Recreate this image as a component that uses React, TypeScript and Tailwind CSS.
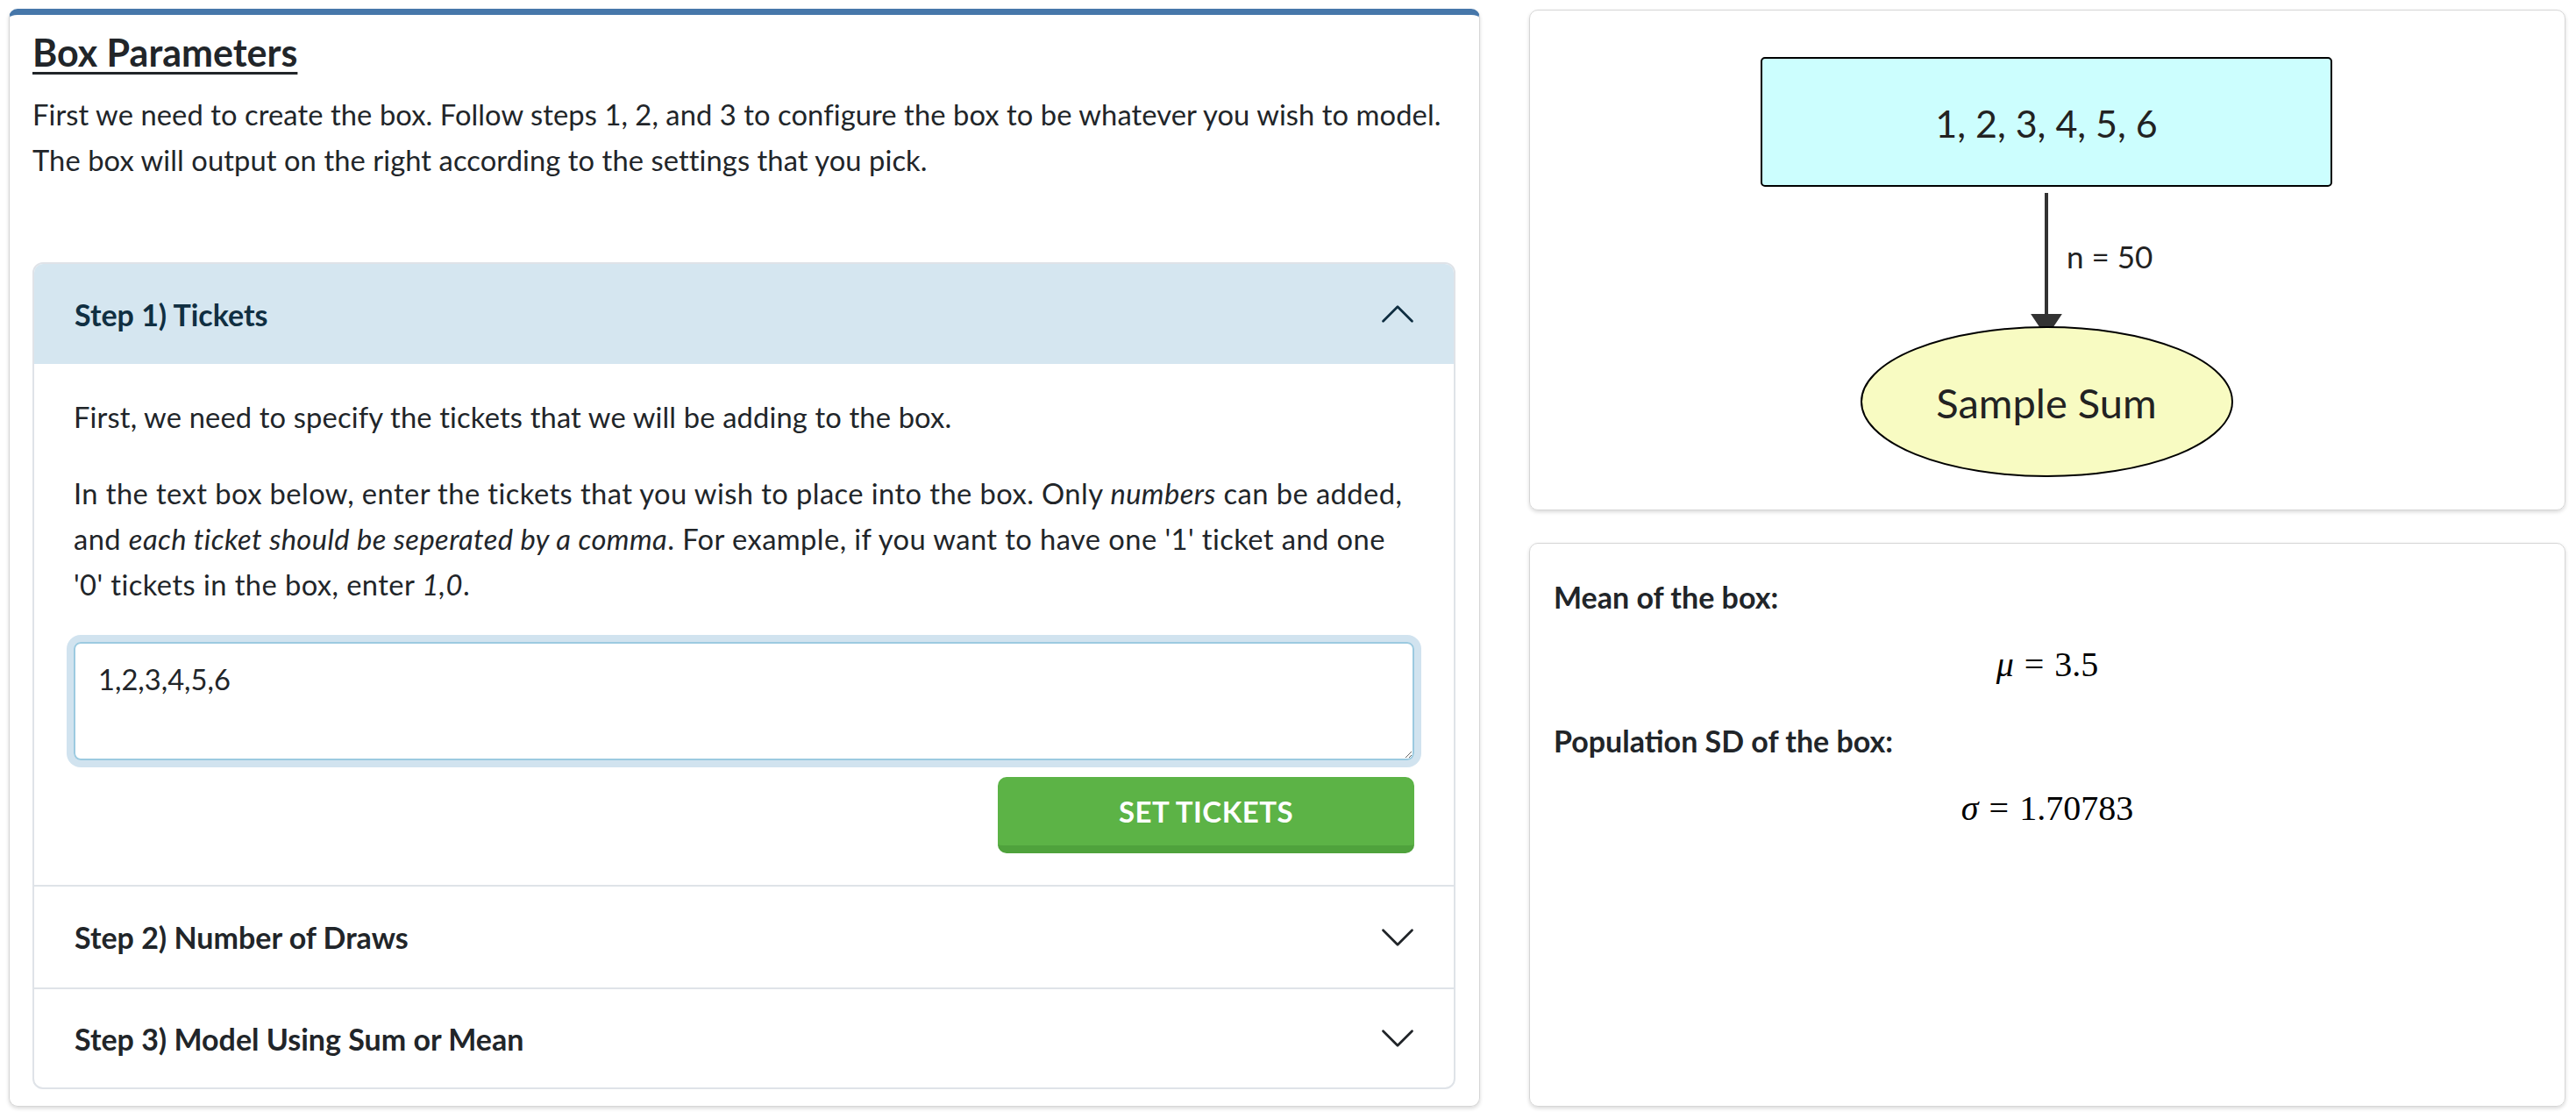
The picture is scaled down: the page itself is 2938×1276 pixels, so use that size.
import React from "react";

const Chevron = ({ up = false, color = "#212529" }: { up?: boolean; color?: string }) => (
  <svg width="44" height="44" viewBox="0 0 16 16" fill={color} className={up ? "rotate-180" : ""}>
    <path
      fillRule="evenodd"
      d="M1.646 4.646a.5.5 0 0 1 .708 0L8 10.293l5.646-5.647a.5.5 0 0 1 .708.708l-6 6a.5.5 0 0 1-.708 0l-6-6a.5.5 0 0 1 0-.708z"
    />
  </svg>
);

export default function App() {
  return (
    <div
      className="w-[2938px] h-[1276px] bg-white flex gap-[56px] pt-[10px] pl-[10px] text-[#212529]"
      style={{ fontFamily: "Lato, 'Noto Sans', sans-serif" }}
    >
      {/* Left card */}
      <div className="w-[1678px] h-[1252px] border border-[#d6d6d6] border-t-[7px] border-t-[#4677aa] rounded-[10px] shadow-[0_2px_4px_rgba(0,0,0,0.15)] pl-[26px] pr-[27px] pt-[19px] flex flex-col">
        <h1 className="text-[43px] leading-[47px] font-bold underline decoration-[3px] underline-offset-[6px] self-start">
          Box Parameters
        </h1>
        <p className="mt-[22px] text-[32.7px] leading-[52px] tracking-[0.08px]">
          <span className="block whitespace-nowrap">
            First we need to create the box. Follow steps 1, 2, and 3 to configure the box to be whatever you wish to model.
          </span>
          <span className="block whitespace-nowrap">
            The box will output on the right according to the settings that you pick.
          </span>
        </p>

        <div className="mt-[90px] border-2 border-[#dfe3e8] rounded-[12px] overflow-hidden flex flex-col">
          {/* Step 1 header */}
          <div className="h-[114px] bg-[#d5e6f0] flex items-center justify-between pl-[46px] pr-[42px]">
            <span className="text-[34px] font-bold text-[#102f42]">Step 1) Tickets</span>
            <Chevron up color="#102f42" />
          </div>
          {/* Step 1 body */}
          <div className="px-[45px] pt-[35px] pb-[36px] flex flex-col text-[32.7px] leading-[52px]">
            <p className="whitespace-nowrap tracking-[0.15px]">
              First, we need to specify the tickets that we will be adding to the box.
            </p>
            <p className="mt-[35px] tracking-[0.42px]">
              <span className="block whitespace-nowrap">
                In the text box below, enter the tickets that you wish to place into the box. Only <em>numbers</em> can be
                added,
              </span>
              <span className="block whitespace-nowrap">
                and <em>each ticket should be seperated by a comma</em>. For example, if you want to have one '1' ticket
                and one
              </span>
              <span className="block whitespace-nowrap">
                '0' tickets in the box, enter <em>1,0</em>.
              </span>
            </p>
            <textarea
              defaultValue="1,2,3,4,5,6"
              className="mt-[39px] w-full h-[135px] border-2 border-[#9ccae0] rounded-[8px] shadow-[0_0_0_8px_#d1e3ef] pl-[26px] pt-[15px] text-[32.7px] leading-[52px] text-[#212529] outline-none"
              style={{ fontFamily: "Lato, 'Noto Sans', sans-serif" }}
            />
            <button className="mt-[19px] self-end w-[475px] h-[87px] bg-[#5cb346] border-b-[9px] border-[#4fa23c] rounded-[10px] text-white font-bold text-[33px] tracking-[0.5px] flex items-center justify-center">
              SET TICKETS
            </button>
          </div>
          {/* Step 2 */}
          <div className="h-[117px] border-t-2 border-[#dfe3e8] flex items-center justify-between pl-[46px] pr-[42px]">
            <span className="text-[34px] font-bold">Step 2) Number of Draws</span>
            <Chevron />
          </div>
          {/* Step 3 */}
          <div className="h-[114px] border-t-2 border-[#dfe3e8] flex items-center justify-between pl-[46px] pr-[42px]">
            <span className="text-[34px] font-bold">Step 3) Model Using Sum or Mean</span>
            <Chevron />
          </div>
        </div>
      </div>

      {/* Right column */}
      <div className="w-[1182px] mt-[1px] flex flex-col gap-[37px]">
        <div className="h-[571px] border border-[#d6d6d6] rounded-[10px] shadow-[0_2px_4px_rgba(0,0,0,0.15)] overflow-hidden">
          <svg width="1180" height="569" viewBox="0 0 1180 569">
            <rect x="264" y="54" width="650" height="146" rx="4" fill="#ccfefe" stroke="#000" strokeWidth="2" />
            <text x="589" y="145" textAnchor="middle" fontSize="43" fill="#222" fontFamily="Lato, sans-serif">
              1, 2, 3, 4, 5, 6
            </text>
            <line x1="589" y1="208" x2="589" y2="350" stroke="#333" strokeWidth="4" />
            <polygon points="573,347 605,347 589,371" fill="#333" stroke="#333" strokeWidth="2" />
            <text x="612" y="294" fontSize="35" fill="#222" fontFamily="Lato, sans-serif">
              n = 50
            </text>
            <ellipse cx="589.5" cy="446" rx="211.5" ry="85" fill="#f8fbc2" stroke="#000" strokeWidth="2" />
            <text x="589" y="465" textAnchor="middle" fontSize="47" fill="#222" fontFamily="Lato, sans-serif">
              Sample Sum
            </text>
          </svg>
        </div>
        <div className="h-[643px] border border-[#d6d6d6] rounded-[10px] shadow-[0_2px_4px_rgba(0,0,0,0.15)] pl-[27px] pr-[27px] pt-[35px] flex flex-col">
          <div className="text-[34px] leading-[52px] font-bold">Mean of the box:</div>
          <div
            className="mt-[25px] text-[40px] leading-[52px] text-center text-black"
            style={{ fontFamily: "'Liberation Serif', serif" }}
          >
            <i>μ</i>
            <span className="mx-[12px]">=</span>3.5
          </div>
          <div className="mt-[35px] text-[34px] leading-[52px] font-bold">Population SD of the box:</div>
          <div
            className="mt-[25px] text-[40px] leading-[52px] text-center text-black"
            style={{ fontFamily: "'Liberation Serif', serif" }}
          >
            <i>σ</i>
            <span className="mx-[12px]">=</span>1.70783
          </div>
        </div>
      </div>
    </div>
  );
}
